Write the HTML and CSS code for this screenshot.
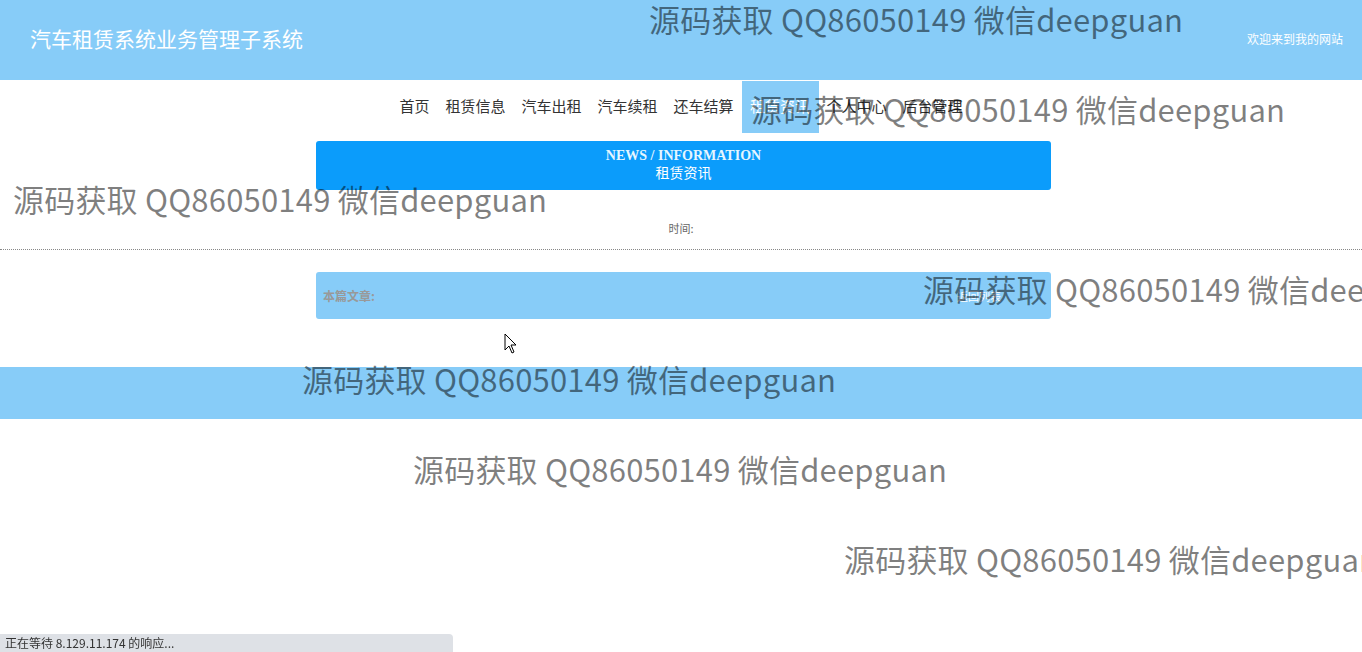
FILE: index.html
```html
<!DOCTYPE html>
<html lang="zh-CN">
<head>
  <meta charset="UTF-8" />
  <meta name="viewport" content="width=device-width, initial-scale=1.0"/>
  <title>租赁资讯 - 汽车租赁系统业务管理子系统</title>
  <link rel="stylesheet" href="styles.css">
</head>
<body>
  <div class="topbar">
    <div class="logo">汽车租赁系统业务管理子系统</div>
    <div class="welcome">欢迎来到我的网站</div>
  </div>

  <div class="menu">
    <a href="#">首页</a>
    <a href="#">租赁信息</a>
    <a href="#">汽车出租</a>
    <a href="#">汽车续租</a>
    <a href="#">还车结算</a>
    <a href="#" class="active">租赁资讯</a>
    <a href="#">个人中心</a>
    <a href="#">后台管理</a>
  </div>

  <div class="news-head">
    <div class="en">NEWS / INFORMATION</div>
    <div class="cn">租赁资讯</div>
  </div>

  <div class="time">时间:</div>
  <div class="line"></div>

  <div class="article">
    <span class="label">本篇文章:</span>
    <a href="#" class="back">返回列表</a>
  </div>

  <div class="footer"></div>

  <!-- 水印 -->
  <div class="marks">
    <span class="mark m1">源码获取 QQ86050149 微信deepguan</span>
    <span class="mark m2">源码获取 QQ86050149 微信deepguan</span>
    <span class="mark m3">源码获取 QQ86050149 微信deepguan</span>
    <span class="mark m4">源码获取 QQ86050149 微信deepguan</span>
    <span class="mark m5">源码获取 QQ86050149 微信deepguan</span>
    <span class="mark m6">源码获取 QQ86050149 微信deepguan</span>
    <span class="mark m7">源码获取 QQ86050149 微信deepguan</span>
  </div>

  <svg class="cursor" width="14" height="22" viewBox="0 0 14 22">
    <path d="M1 1 L1 17 L5 13 L8 20 L10 19 L7 12 L12 12 Z" fill="#fff" stroke="#000" stroke-width="1"/>
  </svg>

  <div class="status">正在等待 8.129.11.174 的响应...</div>
</body>
</html>
```

FILE: styles.css
```css
:root {
  --qianlan: #87ccf8;
  --shenlan: #0b9cfb;
}

html, body {
  overflow: hidden;
}

body {
  margin: 0;
  font-family: "Noto Sans CJK SC", "Liberation Sans", sans-serif;
  color: #333;
  background: #fff;
  position: relative;
  min-height: 652px;
}

.topbar {
  height: 80px;
  background: var(--qianlan);
  display: flex;
  justify-content: space-between;
  align-items: center;
  padding: 0 19px 4px 30px;
  box-sizing: border-box;
}

.logo {
  color: #fff;
  font-size: 21px;
}

.welcome {
  color: #fff;
  font-size: 12px;
}

.menu {
  height: 52px;
  margin-top: 1px;
  padding-bottom: 4px;
  box-sizing: border-box;
  display: flex;
  justify-content: center;
  align-items: stretch;
}

.menu a {
  display: flex;
  align-items: center;
  padding: 0 8px;
  font-size: 15px;
  color: #333;
  text-decoration: none;
}

.menu a.active {
  background: var(--qianlan);
  color: #fff;
  padding: 0 8.5px;
  margin-bottom: -4px;
  padding-bottom: 4px;
}

.news-head {
  width: 735px;
  height: 49px;
  margin: 8px 0 0 calc(50% - 365px);
  background: var(--shenlan);
  border-radius: 3px;
  text-align: center;
  box-sizing: border-box;
  padding-top: 6px;
}

.news-head .en {
  font-family: "Liberation Serif", serif;
  font-weight: bold;
  font-size: 14px;
  line-height: 17px;
  color: #e6f6ff;
}

.news-head .cn {
  font-size: 14px;
  line-height: 17px;
  color: #fff;
}

.time {
  margin-top: 30px;
  text-align: center;
  font-size: 11px;
  line-height: 16px;
  color: #666;
}

.line {
  margin-top: 13px;
  border-top: 1px dotted #888;
}

.article {
  width: 735px;
  height: 47px;
  margin: 22px 0 0 calc(50% - 365px);
  background: var(--qianlan);
  border-radius: 3px;
  display: flex;
  justify-content: space-between;
  align-items: center;
  padding: 0 50px 0 7px;
  box-sizing: border-box;
}

.article .label {
  font-size: 12px;
  font-weight: bold;
  color: #999;
}

.article .back {
  font-size: 11px;
  color: #fff;
  text-decoration: none;
}

.footer {
  height: 52px;
  margin-top: 48px;
  background: var(--qianlan);
}

.marks {
  position: absolute;
  top: 0;
  left: 0;
  width: 1362px;
  height: 652px;
  overflow: hidden;
  pointer-events: none;
}

.mark {
  position: absolute;
  white-space: nowrap;
  font-family: "Noto Sans CJK SC", sans-serif;
  font-size: 31px;
  letter-spacing: 0.2px;
  line-height: 38px;
  color: rgba(0, 0, 0, 0.5);
}

.m1 { left: 649px; top: 0; }
.m2 { left: 751px; top: 90px; }
.m3 { left: 13px; top: 180px; }
.m4 { left: 923px; top: 270px; }
.m5 { left: 302px; top: 360px; }
.m6 { left: 413px; top: 450px; }
.m7 { left: 844px; top: 540px; }

.cursor {
  position: absolute;
  left: 504px;
  top: 333px;
}

.status {
  position: fixed;
  left: 0;
  bottom: 0;
  width: 453px;
  height: 18px;
  background: #dee1e6;
  border-top-right-radius: 4px;
  font-size: 12px;
  line-height: 18px;
  padding-left: 5px;
  box-sizing: border-box;
  color: #333;
}
```
